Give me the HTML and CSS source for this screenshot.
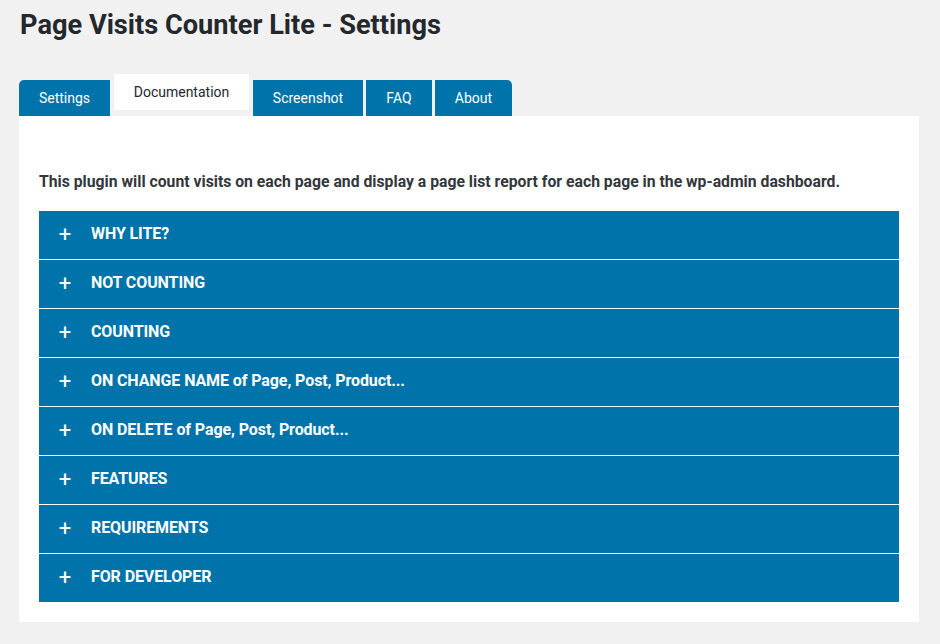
FILE: index.html
```html
<!DOCTYPE html>
<html>
<head>
<meta charset="utf-8">
<link rel="stylesheet" href="styles.css">
</head>
<body>
<div class="wrap">
  <h1 class="title">Page Visits Counter Lite - Settings</h1>
  <div class="tabs">
    <div class="tab first">Settings</div>
    <div class="tab active">Documentation</div>
    <div class="tab">Screenshot</div>
    <div class="tab">FAQ</div>
    <div class="tab last">About</div>
  </div>
  <div class="panel">
    <p class="intro">This plugin will count visits on each page and display a page list report for each page in the wp-admin dashboard.</p>
    <div class="accordion">
      <div class="item"><span class="plus">+</span><span class="label">WHY LITE?</span></div>
      <div class="item"><span class="plus">+</span><span class="label">NOT COUNTING</span></div>
      <div class="item"><span class="plus">+</span><span class="label">COUNTING</span></div>
      <div class="item"><span class="plus">+</span><span class="label">ON CHANGE NAME of Page, Post, Product...</span></div>
      <div class="item"><span class="plus">+</span><span class="label">ON DELETE of Page, Post, Product...</span></div>
      <div class="item"><span class="plus">+</span><span class="label">FEATURES</span></div>
      <div class="item"><span class="plus">+</span><span class="label">REQUIREMENTS</span></div>
      <div class="item"><span class="plus">+</span><span class="label">FOR DEVELOPER</span></div>
    </div>
  </div>
</div>
</body>
</html>
```
FILE: styles.css
```css
html, body {
  margin: 0;
  padding: 0;
  background: #f1f1f1;
  font-family: Roboto, "Liberation Sans", sans-serif;
}
.wrap {
  padding: 0 21px 0 19px;
}
.title {
  margin: 0;
  padding: 7px 0 0 1px;
  height: 74px;
  box-sizing: border-box;
  font-size: 27.2px;
  font-weight: 700;
  color: #23282d;
  line-height: 36px;
}
.tabs {
  display: flex;
  align-items: flex-start;
  gap: 3px;
  height: 42px;
}
.tab {
  margin-top: 6px;
  height: 36px;
  line-height: 36px;
  background: #0073aa;
  color: #fff;
  font-size: 14px;
  text-align: center;
}
.tab.first { width: 91px; border-top-left-radius: 5px; margin-right: 1px; }
.tab.active {
  margin-top: 0;
  width: 135px;
  background: #fff;
  color: #23282d;
  margin-right: 1px;
}
.tabs .tab:nth-child(3) { width: 110px; }
.tabs .tab:nth-child(4) { width: 66px; }
.tab.last { width: 77px; border-top-right-radius: 5px; }
.panel {
  background: #fff;
  padding: 56px 20px 20px 20px;
}
.intro {
  margin: 0 0 19px 0;
  font-size: 15.75px;
  font-weight: 700;
  color: #32373c;
  line-height: 20px;
}
.accordion {
  display: flex;
  flex-direction: column;
  gap: 1px;
}
.item {
  height: 48px;
  background: #0073aa;
  display: flex;
  align-items: center;
  color: #fff;
  font-weight: 700;
  font-size: 16px;
}
.plus {
  width: 52px;
  text-align: center;
  font-size: 22px;
  font-weight: 400;
  line-height: 1;
}
.label {
  letter-spacing: -0.1px;
  padding-bottom: 3px;
}
```
